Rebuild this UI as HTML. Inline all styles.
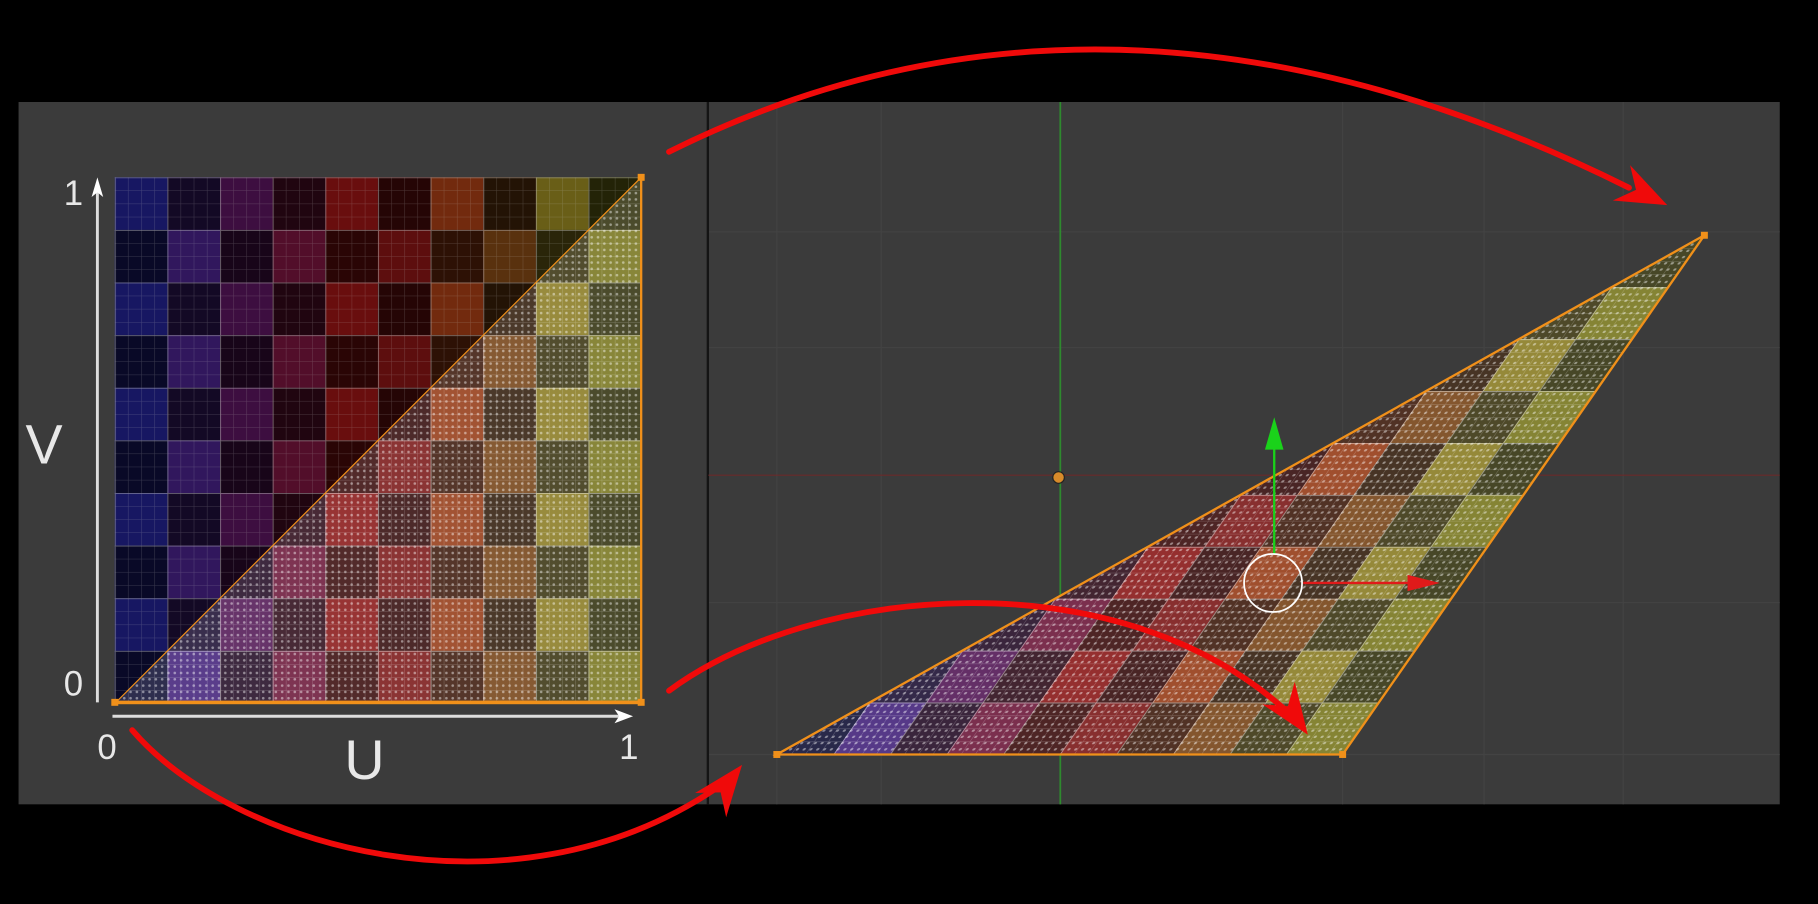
<!DOCTYPE html>
<html><head><meta charset="utf-8"><style>
html,body{margin:0;padding:0;background:#000;width:1818px;height:904px;overflow:hidden}
svg{display:block}
text{font-family:"Liberation Sans",sans-serif;fill:#e8e8e8}
</style></head><body>
<svg width="1818" height="904" viewBox="0 0 1568 780" preserveAspectRatio="none">
<defs>
<linearGradient id="cols" x1="0" y1="0" x2="10" y2="0" gradientUnits="userSpaceOnUse">
<stop offset="0" stop-color="#2828a8"/><stop offset=".1" stop-color="#2828a8"/>
<stop offset=".1" stop-color="#5428a0"/><stop offset=".2" stop-color="#5428a0"/>
<stop offset=".2" stop-color="#6a1a6e"/><stop offset=".3" stop-color="#6a1a6e"/>
<stop offset=".3" stop-color="#8c1a48"/><stop offset=".4" stop-color="#8c1a48"/>
<stop offset=".4" stop-color="#b41a1a"/><stop offset=".5" stop-color="#b41a1a"/>
<stop offset=".5" stop-color="#a01a1a"/><stop offset=".6" stop-color="#a01a1a"/>
<stop offset=".6" stop-color="#c44a18"/><stop offset=".7" stop-color="#c44a18"/>
<stop offset=".7" stop-color="#9a5418"/><stop offset=".8" stop-color="#9a5418"/>
<stop offset=".8" stop-color="#b4a228"/><stop offset=".9" stop-color="#b4a228"/>
<stop offset=".9" stop-color="#9c9a22"/><stop offset="1" stop-color="#9c9a22"/>
</linearGradient>
<pattern id="chk" width="2" height="2" patternUnits="userSpaceOnUse">
<rect x="1" y="0" width="1" height="1" fill="#000" opacity=".6"/>
<rect x="0" y="1" width="1" height="1" fill="#000" opacity=".6"/>
</pattern>
<pattern id="fine" width=".25" height=".25" patternUnits="userSpaceOnUse">
<path d="M0 0H.25M0 0V.25" stroke="#fff" stroke-width=".02" opacity=".25"/>
</pattern>
<pattern id="grid1" width="1" height="1" patternUnits="userSpaceOnUse">
<path d="M0 0H1M0 0V1" stroke="#fff" stroke-width=".04" opacity=".35"/>
</pattern>
<pattern id="dots" width=".12" height=".12" patternUnits="userSpaceOnUse">
<circle cx=".06" cy=".06" r=".025" fill="#fff" opacity=".45"/>
</pattern>
<g id="tex">
<rect x="0" y="0" width="10" height="10" fill="url(#cols)"/>
<rect x="0" y="0" width="10" height="10" fill="url(#chk)"/>
<rect x="0" y="0" width="10" height="10" fill="#000" opacity=".25"/>
<rect x="0" y="0" width="10" height="10" fill="url(#fine)"/>
<rect x="0" y="0" width="10" height="10" fill="url(#grid1)"/>
</g>
<clipPath id="tri"><polygon points="0,10 10,10 10,0"/></clipPath>
<clipPath id="triU"><polygon points="0,0 10,0 0,10"/></clipPath>
<polygon id="ah" points="0,0 -44,-17 -30,0 -44,17" fill="#f00a0a"/>
</defs>
<rect width="1568" height="780" fill="#000"/>
<rect x="16" y="88" width="1519" height="606" fill="#3b3b3b"/>
<g stroke="#434343" stroke-width="1">
<path d="M670 88V694M760 88V694M1158 88V694M1280 88V694M1400 88V694M611 200H1535M611 300H1535M611 520H1535M611 651H1535"/>
</g>
<line x1="610.5" y1="88" x2="610.5" y2="694" stroke="#141414" stroke-width="2"/>
<line x1="611" y1="410" x2="1535" y2="410" stroke="#6a2a2a" stroke-width="1"/>
<line x1="914.5" y1="88" x2="914.5" y2="694" stroke="#2e8a2e" stroke-width="1.5"/>

<g transform="translate(99,153) scale(45.4)">
<use href="#tex"/>
<g clip-path="url(#triU)"><rect width="10" height="10" fill="#000" opacity=".22"/></g>
<g clip-path="url(#tri)">
<rect width="10" height="10" fill="#fff" opacity=".14"/>
<rect width="10" height="10" fill="url(#dots)"/>
</g>
<polygon points="0,10 10,10 10,0" fill="none" stroke="#f0901a" stroke-width="1.2" vector-effect="non-scaling-stroke"/>
</g>
<line x1="99" y1="606" x2="553" y2="606" stroke="#f0901a" stroke-width="3"/>
<line x1="553" y1="153" x2="553" y2="606" stroke="#f0901a" stroke-width="2"/>
<g fill="#f0901a"><rect x="96" y="603" width="6" height="6"/><rect x="550" y="603" width="6" height="6"/><rect x="550" y="150" width="6" height="6"/></g>

<line x1="84" y1="160" x2="84" y2="606" stroke="#ddd" stroke-width="2.5"/>
<polygon points="84,153 79,170 84,166 89,170" fill="#fff"/>
<line x1="97" y1="618" x2="538" y2="618" stroke="#ddd" stroke-width="2.5"/>
<polygon points="546,618 530,612 534,618 530,624" fill="#fff"/>
<text x="55" y="177" font-size="30">1</text>
<text x="55" y="600" font-size="30">0</text>
<text x="84" y="655" font-size="30">0</text>
<text x="534" y="655" font-size="30">1</text>
<text x="22" y="400" font-size="48">V</text>
<text x="297" y="672" font-size="48">U</text>

<g transform="matrix(48.8,0,-31.2,44.8,982,203)">
<g clip-path="url(#tri)">
<use href="#tex"/>
<rect width="10" height="10" fill="#fff" opacity=".12"/>
<rect width="10" height="10" fill="url(#dots)"/>
</g>
</g>
<polygon points="670,651 1158,651 1470,203" fill="none" stroke="#f0901a" stroke-width="2"/>
<g fill="#f0901a"><rect x="667" y="648" width="6" height="6"/><rect x="1155" y="648" width="6" height="6"/><rect x="1467" y="200" width="6" height="6"/></g>
<circle cx="913" cy="412" r="5" fill="#d88a2a" stroke="#222" stroke-width="1"/>

<line x1="1099" y1="385" x2="1099" y2="478" stroke="#1ad21a" stroke-width="2"/>
<polygon points="1099,360 1091,388 1107,388" fill="#1ad21a"/>
<line x1="1124" y1="503" x2="1222" y2="503" stroke="#e01a1a" stroke-width="2"/>
<polygon points="1242,503 1214,496 1214,510" fill="#e01a1a"/>
<circle cx="1098" cy="503" r="25" fill="none" stroke="#fff" stroke-width="1.5"/>

<g fill="none" stroke="#f00a0a" stroke-width="5" stroke-linecap="round">
<path d="M577 131 Q960 -60 1405 162"/>
<path d="M577 596 C700 505 960 480 1108 612"/>
<path d="M114 630 C200 730 440 800 618 680"/>
</g>
<use href="#ah" transform="translate(1438,177) rotate(26)"/>
<use href="#ah" transform="translate(1128,634) rotate(55)"/>
<use href="#ah" transform="translate(640,660) rotate(-52)"/>
</svg>
</body></html>
